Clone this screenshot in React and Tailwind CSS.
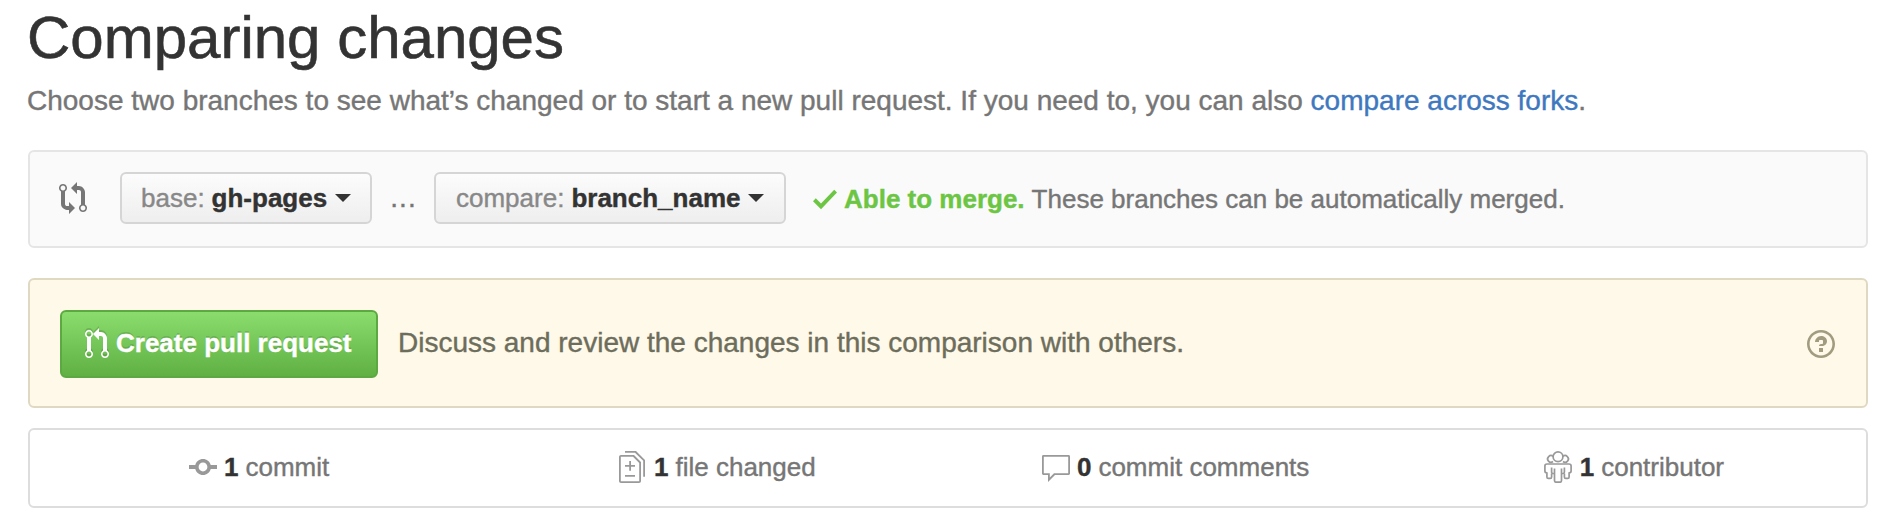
import React from "react";

const PATHS = {
  compare: "M5 12H4c-.27-.02-.48-.11-.69-.31-.21-.2-.3-.42-.31-.69V4.72A1.993 1.993 0 0 0 2 1a1.993 1.993 0 0 0-1 3.72V11c.03.78.34 1.47.94 2.06.6.59 1.28.91 2.06.94h1v2l3-3-3-3v2zM2 1.8c.66 0 1.2.55 1.2 1.2 0 .65-.55 1.2-1.2 1.2C1.35 4.2.8 3.65.8 3c0-.65.55-1.2 1.2-1.2zm11 9.48V5c-.03-.78-.34-1.47-.94-2.06-.6-.59-1.28-.91-2.06-.94H9V0L6 3l3 3V4h1c.27.02.48.11.69.31.21.2.3.42.31.69v6.28A1.993 1.993 0 0 0 12 15a1.993 1.993 0 0 0 1-3.72zm-1 2.92c-.66 0-1.2-.55-1.2-1.2 0-.65.55-1.2 1.2-1.2.65 0 1.2.55 1.2 1.2 0 .65-.55 1.2-1.2 1.2z",
  pull: "M11 11.28V5c-.03-.78-.34-1.47-.94-2.06C9.46 2.35 8.78 2.03 8 2H7V0L4 3l3 3V4h1c.27.02.48.11.69.31.21.2.3.42.31.69v6.28A1.993 1.993 0 0 0 10 15a1.993 1.993 0 0 0 1-3.72zm-1 2.92c-.66 0-1.2-.55-1.2-1.2 0-.65.55-1.2 1.2-1.2.65 0 1.2.55 1.2 1.2 0 .65-.55 1.2-1.2 1.2zM4 3c0-1.11-.89-2-2-2a1.993 1.993 0 0 0-1 3.72v6.56A1.993 1.993 0 0 0 2 15a1.993 1.993 0 0 0 1-3.72V4.72c.59-.34 1-.98 1-1.72zm-.8 10c0 .66-.55 1.2-1.2 1.2-.65 0-1.2-.55-1.2-1.2 0-.65.55-1.2 1.2-1.2.65 0 1.2.55 1.2 1.2zM2 4.2C1.34 4.2.8 3.65.8 3c0-.65.55-1.2 1.2-1.2.65 0 1.2.55 1.2 1.2 0 .65-.55 1.2-1.2 1.2z",
  check: "M12 4.700l-8 8.400-4-4 1.400-1.500L4 10.300l6.600-6.900L12 4.700z",
  question: "M6 10h2v2H6v-2zm4-3.5C10 8.64 8 9 8 9H6c0-.55.45-1 1-1h.5c.28 0 .5-.22.5-.5v-1c0-.28-.22-.5-.5-.5h-1c-.28 0-.5.22-.5.5V7H4c0-1.5 1.5-3 3-3s3 1 3 2.5zM7 2.3c3.14 0 5.7 2.56 5.7 5.7s-2.56 5.7-5.7 5.7A5.71 5.71 0 0 1 1.3 8c0-3.14 2.56-5.7 5.7-5.7zM7 1C3.14 1 0 4.14 0 8s3.14 7 7 7 7-3.14 7-7-3.14-7-7-7z",
  commit: "M10.86 7c-.45-1.72-2-3-3.86-3-1.86 0-3.41 1.28-3.86 3H0v2h3.14c.45 1.72 2 3 3.86 3 1.86 0 3.41-1.28 3.86-3H14V7h-3.14zM7 10.2c-1.22 0-2.2-.98-2.2-2.2 0-1.22.98-2.2 2.2-2.2 1.22 0 2.2.98 2.2 2.2 0 1.22-.98 2.2-2.2 2.2z",
  diff: "M6 5h-.9v2H3v.9h2.100v2H6v-2h2V7H6V5zm-3 7.900h5V12H3v.900zM7.5 2L11 5.5V15c0 .55-.45 1-1 1H1c-.55 0-1-.45-1-1V3c0-.55.45-1 1-1h6.500zM10.100 6L7 2.900H.9v12.200h9.200V6zM8.500 0H3v.9h5l4.100 4v8h.9V4.500L8.500 0z",
  comment: "M13.300 2H.7c-.4 0-.7.3-.7.7v8.600c0 .4.3.7.7.7H3v3.500L6.500 12h6.800c.4 0 .7-.3.7-.7V2.700c0-.4-.3-.7-.7-.7zm-.2 9.100H6L3.900 13.200v-2.100H.9V2.900h12.200v8.200z",
};

function Icon({ name, w, className }) {
  return (
    <svg viewBox={`0 0 ${w} 16`} width={w * 2} height="32" fill="currentColor" className={`shrink-0 ${className || ""}`} aria-hidden="true">
      <path fillRule="evenodd" d={PATHS[name]} />
    </svg>
  );
}

function PeopleIcon() {
  return (
    <svg viewBox="0 0 28 32" width="28" height="32" fill="none" stroke="currentColor" strokeWidth="1.7" strokeLinejoin="round" className="shrink-0" aria-hidden="true">
      <circle cx="14" cy="5.800" r="4.900" />
      <path d="M9 10.500a3.300 3.300 0 1 1 .2-5M19 10.500a3.300 3.300 0 1 0-.2-5" />
      <path d="M8 13H3c-1.300 0-2.100.8-2.100 2v5c0 1.200.6 1.800 2 1.800V26c0 .9.500 1.400 1.400 1.400h1.900c.9 0 1.400-.5 1.400-1.400V22.500M20 13h5c1.300 0 2.100.8 2.100 2v5c0 1.200-.6 1.800-2 1.800V26c0 .9-.5 1.400-1.400 1.400h-1.900c-.9 0-1.400-.5-1.400-1.400V22.500" />
      <path d="M8 13h12M10.500 17.500V29.500c0 1.100.6 1.700 1.600 1.700h3.800c1 0 1.600-.6 1.600-1.700V17.500M10.500 22.500H9c-.9 0-1.400-.5-1.400-1.400V16.500M17.500 22.500H19c.9 0 1.400-.5 1.400-1.400V16.500" />
    </svg>
  );
}

function Select({ label, value, className }) {
  return (
    <button className={`flex h-[52px] items-center rounded-md border-2 border-[#d5d5d5] bg-linear-to-b from-[#fcfcfc] to-[#eeeeee] whitespace-nowrap text-[#333] ${className}`}>
      <span className="text-[#888]">{label}</span>
      <span className="ml-[7px] font-bold">{value}</span>
      <svg width="16" height="8" className="ml-2" fill="currentColor" aria-hidden="true"><path d="M0 0h16l-8 8z" /></svg>
    </button>
  );
}

function Stat({ icon, count, label, gap }) {
  return (
    <li className="flex flex-1 items-center justify-center">
      <span className="text-[#999]">{icon}</span>
      <span className={`font-bold text-[#333] ${gap}`}>{count}</span>
      <span className="ml-[7px]">{label}</span>
    </li>
  );
}

export default function App() {
  return (
    <main className="h-[512px] overflow-hidden bg-white px-7 font-['Liberation_Sans',Arial,sans-serif] text-[26px] leading-9 whitespace-nowrap text-[#767676] [-webkit-text-stroke:0.4px_currentColor]">
      <h1 className="-ml-px h-[83px] pt-2 text-[60px] leading-[60px] text-[#333] [-webkit-text-stroke:0.6px_currentColor]">Comparing changes</h1>
      <p className="-ml-px h-[67px] text-[28px]">
        Choose two branches to see what’s changed or to start a new pull request. If you need to, you can also{" "}
        <a className="text-[#4078c0]">compare across forks</a>.
      </p>
      <section className="-mr-1 flex h-[98px] items-center rounded-md border-2 border-[#e5e5e5] bg-[#fafafa] pb-0.5 pl-[29px]">
        <Icon name="compare" w={14} />
        <Select label="base:" value="gh-pages" className="ml-[33px] w-[252px] pl-[19px]" />
        <span className="w-[62px] pl-px text-center text-[28px] tracking-[1px]">...</span>
        <Select label="compare:" value="branch_name" className="w-[352px] pl-5" />
        <Icon name="check" w={12} className="mt-0.5 ml-[27px] text-[#6cc644]" />
        <span className="mt-0.5 ml-[7px] font-bold text-[#6cc644]">Able to merge.</span>
        <span className="mt-0.5 ml-[7px]">These branches can be automatically merged.</span>
      </section>
      <section className="mt-[30px] -mr-1 flex h-[130px] items-center rounded-md border-2 border-[#dfd8c2] bg-[#fff9ea] pt-0.5 pr-[31px] pl-[30px]">
        <button className="flex h-[68px] w-[318px] items-center rounded-md border-2 border-[#5ca941] bg-linear-to-b from-[#8add6d] to-[#60b044] pb-0.5 pl-[23px] font-bold text-white [text-shadow:0_-2px_0_rgba(0,0,0,0.15)]">
          <Icon name="pull" w={12} className="mt-0.5 drop-shadow-[0_-2px_0_rgba(0,0,0,0.15)]" />
          <span className="ml-[7px]">Create pull request</span>
        </button>
        <span className="-mt-0.5 ml-5 text-[28px] text-[#6d6d5c]">Discuss and review the changes in this comparison with others.</span>
        <Icon name="question" w={14} className="ml-auto text-[#a19c7f]" />
      </section>
      <ul className="mt-5 -mr-1 flex h-20 rounded-md border-2 border-[#ddd] pr-[3px] pb-0.5">
        <Stat icon={<Icon name="commit" w={14} />} count="1" label="commit" gap="ml-[7px]" />
        <Stat icon={<Icon name="diff" w={13} />} count="1" label="file changed" gap="ml-[9px]" />
        <Stat icon={<Icon name="comment" w={14} />} count="0" label="commit comments" gap="ml-[7px]" />
        <Stat icon={<PeopleIcon />} count="1" label="contributor" gap="ml-2" />
      </ul>
    </main>
  );
}
